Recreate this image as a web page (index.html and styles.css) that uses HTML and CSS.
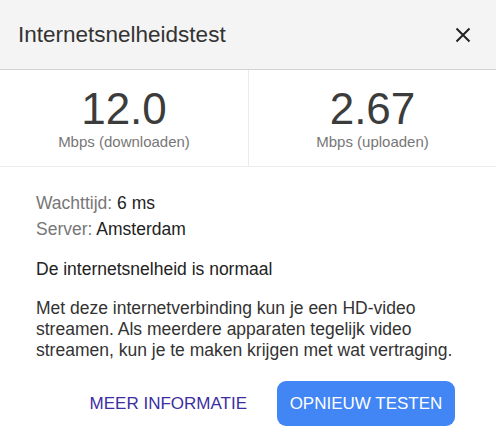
FILE: index.html
```html
<!DOCTYPE html>
<html lang="nl">
<head>
<meta charset="utf-8">
<link rel="stylesheet" href="styles.css">
</head>
<body>
<div class="dialog">
  <header class="head">
    <h1 class="title">Internetsnelheidstest</h1>
    <button class="close" aria-label="Sluiten">
      <svg width="16" height="16" viewBox="0 0 16 16"><path d="M1.5 1.5 L14.5 14.5 M14.5 1.5 L1.5 14.5" stroke="#222" stroke-width="2" fill="none"/></svg>
    </button>
  </header>
  <section class="stats">
    <div class="stat">
      <div class="num">12.0</div>
      <div class="unit">Mbps (downloaden)</div>
    </div>
    <div class="stat">
      <div class="num">2.67</div>
      <div class="unit">Mbps (uploaden)</div>
    </div>
  </section>
  <section class="body">
    <div class="meta"><span class="lbl">Wachttijd:</span> 6 ms</div>
    <div class="meta"><span class="lbl">Server:</span> Amsterdam</div>
    <p class="status">De internetsnelheid is normaal</p>
    <p class="desc">Met deze internetverbinding kun je een HD-video streamen. Als meerdere apparaten tegelijk video streamen, kun je te maken krijgen met wat vertraging.</p>
    <div class="actions">
      <button class="link">MEER INFORMATIE</button>
      <button class="primary">OPNIEUW TESTEN</button>
    </div>
  </section>
</div>
</body>
</html>
```
FILE: styles.css
```css
* { box-sizing: border-box; }
html, body { margin: 0; padding: 0; background: #fff; }
body { font-family: "Liberation Sans", Arial, sans-serif; color: #222; }
.dialog { width: 496px; height: 439px; background: #fff; }
.head {
  height: 70px;
  background: #f4f4f4;
  border-bottom: 1px solid #d4d4d4;
  display: flex;
  align-items: center;
  justify-content: space-between;
  padding: 0 25px 0 18px;
}
.title { margin: 0; font-size: 22.5px; font-weight: normal; color: #333; padding-top: 1px; }
.close { background: none; border: 0; padding: 0; width: 16px; height: 16px; display: flex; cursor: pointer; margin-top: 1px; }
.stats {
  display: grid;
  grid-template-columns: 249px 1fr;
  height: 97px;
  border-bottom: 1px solid #ececec;
}
.stat { display: flex; flex-direction: column; align-items: center; padding-top: 17px; }
.stat:first-child { border-right: 1px solid #ececec; }
.num { font-size: 44px; line-height: 44px; color: #3c3c3c; }
.unit { font-size: 15px; color: #777; margin-top: 2px; }
.body { padding: 23px 36px 0 36px; font-size: 17.5px; }
.meta { line-height: 26px; color: #222; }
.lbl { color: #777; }
.status { margin: 17px 0 0; line-height: 21px; color: #222; }
.desc { margin: 18px 0 0; line-height: 21px; color: #333; }
.actions { display: flex; justify-content: flex-end; align-items: center; gap: 30px; margin-top: 20px; padding-right: 5px; }
.link { background: none; border: 0; padding: 0; font-family: inherit; font-size: 17px; color: #3b2ea3; }
.primary {
  background: #4285f4;
  color: #fff;
  border: 0;
  border-radius: 9px;
  height: 45px;
  width: 178px;
  font-family: inherit;
  font-size: 17px;
  padding: 0;
}
```
